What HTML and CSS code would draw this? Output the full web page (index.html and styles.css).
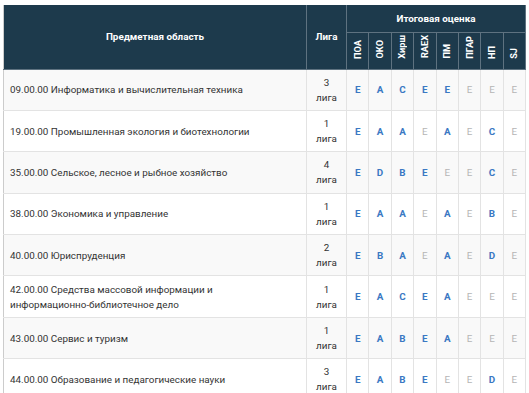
FILE: index.html
```
<!DOCTYPE html>
<html lang="ru">
<head>
    <meta charset="UTF-8">
    <title>Итоговая оценка</title>
    <link rel="stylesheet" href="styles.css">
</head>
<body>
    <table class="rating">
        <thead>
            <tr class="head-top">
                <th rowspan="2" class="subject-head">Предметная область</th>
                <th rowspan="2" class="league-head">Лига</th>
                <th colspan="8">Итоговая оценка</th>
            </tr>
            <tr class="head-sub">
                <th><span class="vert">ПОА</span></th>
                <th><span class="vert">ОКО</span></th>
                <th><span class="vert">Хирш</span></th>
                <th><span class="vert">RAEX</span></th>
                <th><span class="vert">ПМ</span></th>
                <th><span class="vert">ПГАР</span></th>
                <th><span class="vert">НП</span></th>
                <th><span class="vert">SJ</span></th>
            </tr>
        </thead>
        <tbody>
            <tr>
                <td class="subject">09.00.00 Информатика и вычислительная техника</td>
                <td class="league">3<br>лига</td>
                <td class="mark">E</td><td class="mark">A</td><td class="mark">C</td><td class="mark">E</td><td class="mark">E</td><td class="mark none">E</td><td class="mark none">E</td><td class="mark none">E</td>
            </tr>
            <tr>
                <td class="subject">19.00.00 Промышленная экология и биотехнологии</td>
                <td class="league">1<br>лига</td>
                <td class="mark">E</td><td class="mark">A</td><td class="mark">A</td><td class="mark none">E</td><td class="mark">A</td><td class="mark none">E</td><td class="mark">C</td><td class="mark none">E</td>
            </tr>
            <tr>
                <td class="subject">35.00.00 Сельское, лесное и рыбное хозяйство</td>
                <td class="league">4<br>лига</td>
                <td class="mark">E</td><td class="mark">D</td><td class="mark">B</td><td class="mark">E</td><td class="mark none">E</td><td class="mark none">E</td><td class="mark">C</td><td class="mark none">E</td>
            </tr>
            <tr>
                <td class="subject">38.00.00 Экономика и управление</td>
                <td class="league">1<br>лига</td>
                <td class="mark">E</td><td class="mark">A</td><td class="mark">A</td><td class="mark none">E</td><td class="mark">A</td><td class="mark none">E</td><td class="mark">B</td><td class="mark none">E</td>
            </tr>
            <tr>
                <td class="subject">40.00.00 Юриспруденция</td>
                <td class="league">2<br>лига</td>
                <td class="mark">E</td><td class="mark">B</td><td class="mark">A</td><td class="mark none">E</td><td class="mark">A</td><td class="mark none">E</td><td class="mark">D</td><td class="mark none">E</td>
            </tr>
            <tr>
                <td class="subject">42.00.00 Средства массовой информации и информационно-библиотечное дело</td>
                <td class="league">1<br>лига</td>
                <td class="mark">E</td><td class="mark">A</td><td class="mark">C</td><td class="mark">E</td><td class="mark">A</td><td class="mark none">E</td><td class="mark none">E</td><td class="mark none">E</td>
            </tr>
            <tr>
                <td class="subject">43.00.00 Сервис и туризм</td>
                <td class="league">1<br>лига</td>
                <td class="mark">E</td><td class="mark">A</td><td class="mark">B</td><td class="mark">E</td><td class="mark">A</td><td class="mark none">E</td><td class="mark none">E</td><td class="mark none">E</td>
            </tr>
            <tr>
                <td class="subject">44.00.00 Образование и педагогические науки</td>
                <td class="league">3<br>лига</td>
                <td class="mark">E</td><td class="mark">A</td><td class="mark">B</td><td class="mark">E</td><td class="mark none">E</td><td class="mark none">E</td><td class="mark">D</td><td class="mark none">E</td>
            </tr>
        </tbody>
    </table>
</body>
</html>
```

FILE: styles.css
```
* { box-sizing: border-box; }
body {
    margin: 5px 3px;
    background: #fff;
    font-family: Roboto, 'Liberation Sans', sans-serif;
    font-size: 9.85px;
    color: #333;
}

.rating {
    width: 523px;
    border-collapse: collapse;
    table-layout: fixed;
    border-left: 1px solid #ccc;
}
.rating th {
    background: #1d3a4c;
    color: #fff;
    font-weight: 700;
    border: 1px solid #5e7280;
    border-top: none;
    padding: 0;
    text-align: center;
}
.rating .subject-head { width: 303px; border-left: none; }
.rating .league-head { width: 40px; }

.head-top th { height: 27px; }
.head-sub th {
    height: 37px;
    width: 22.5px;
    vertical-align: bottom;
    padding-bottom: 10px;
    line-height: 0;
}

.vert {
    display: inline-block;
    writing-mode: vertical-rl;
    transform: rotate(180deg);
    font-size: 9.2px;
    line-height: 12px;
}

.rating td {
    border: 1px solid #e3e3e3;
    height: 41.4px;
    padding: 0;
    line-height: 15px;
}
.rating tbody tr:nth-child(odd) td { background: #f9f9f9; }
.rating td:first-child { border-left: none; }

.subject {
    padding: 0 24px 0 6px !important;
    text-align: left;
}
.league { text-align: center; }
.mark {
    text-align: center;
    font-weight: 700;
    color: #3a78c3;
}
.mark.none {
    font-weight: 400;
    color: #b5b5b5;
}
```
